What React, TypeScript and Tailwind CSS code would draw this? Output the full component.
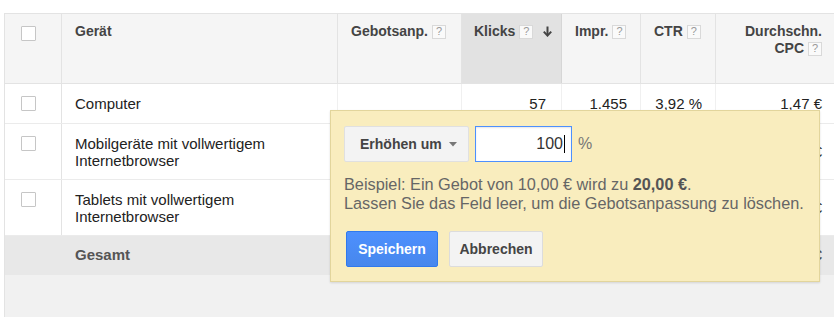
import React from "react";

const Q = () => (
  <span className="inline-flex items-center justify-center w-[14px] h-[14px] ml-[4px] border border-[#d9d9d9] bg-[#fafafa] text-[#999] text-[11px] font-normal leading-none align-[1px]">
    ?
  </span>
);

const Box = () => (
  <div className="w-[15px] h-[15px] border border-[#c6c6c6] bg-white rounded-[1px]" />
);

const DownArrow = () => (
  <svg width="9" height="11" viewBox="0 0 9 11" className="inline-block ml-[10px] align-[-1px]">
    <path d="M4.5 0.5 V9" stroke="#444" strokeWidth="2" />
    <path d="M0.8 5.6 L4.5 9.6 L8.2 5.6" stroke="#444" strokeWidth="2" fill="none" />
  </svg>
);

type Row = { name: string[]; klicks: string; impr: string; ctr: string; cpc: string; h: string };

const rows: Row[] = [
  { name: ["Computer"], klicks: "57", impr: "1.455", ctr: "3,92 %", cpc: "1,47 €", h: "h-[40px]" },
  { name: ["Mobilgeräte mit vollwertigem", "Internetbrowser"], klicks: "", impr: "", ctr: "", cpc: "€", h: "h-[56px]" },
  { name: ["Tablets mit vollwertigem", "Internetbrowser"], klicks: "", impr: "", ctr: "", cpc: "€", h: "h-[56px]" },
];

export default function App() {
  return (
    <div className="relative w-[834px] h-[319px] bg-white overflow-hidden font-['Liberation_Sans',Arial,sans-serif]">
      <div className="pt-[13px] pl-[4px]">
        <div className="border-l border-[#e3e3e3]">
          {/* header */}
          <div className="flex h-[71px] bg-[#f5f5f5] border-t border-b border-[#e3e3e3] text-[14px] leading-[17px] font-bold text-[#444]">
            <div className="w-[57px] shrink-0 border-r border-[#e3e3e3] pl-[16px] pt-[12px]">
              <Box />
            </div>
            <div className="w-[276px] shrink-0 border-r border-[#e3e3e3] pl-[13px] pt-[9px]">Gerät</div>
            <div className="w-[124px] shrink-0 border-r border-[#e3e3e3] pl-[13px] pt-[9px] whitespace-nowrap">
              Gebotsanp.<Q />
            </div>
            <div className="w-[100px] shrink-0 border-r border-[#d6d6d6] bg-[#e2e2e2] pl-[12px] pt-[9px] whitespace-nowrap">
              Klicks<Q />
              <DownArrow />
            </div>
            <div className="w-[79px] shrink-0 border-r border-[#e3e3e3] pl-[13px] pt-[9px] whitespace-nowrap">
              Impr.<Q />
            </div>
            <div className="w-[75px] shrink-0 border-r border-[#e3e3e3] pl-[13px] pt-[9px] whitespace-nowrap">
              CTR<Q />
            </div>
            <div className="flex-1 pr-[12px] pt-[9px] text-right">
              <div>Durchschn.</div>
              <div>
                CPC<Q />
              </div>
            </div>
          </div>

          {/* rows */}
          {rows.map((r, i) => (
            <div
              key={i}
              className={`flex ${r.h} border-b border-[#ebebeb] text-[15px] leading-[17px] text-[#222]`}
            >
              <div className="w-[57px] shrink-0 border-r border-[#e3e3e3] pl-[16px] pt-[12px]">
                <Box />
              </div>
              <div className="w-[276px] shrink-0 border-r border-[#f0f0f0] pl-[13px] flex flex-col justify-center">
                {r.name.map((n, j) => (
                  <div key={j}>{n}</div>
                ))}
              </div>
              <div className="w-[124px] shrink-0 border-r border-[#f0f0f0]" />
              <div className="w-[100px] shrink-0 border-r border-[#f0f0f0] pr-[15px] flex items-center justify-end">{r.klicks}</div>
              <div className="w-[79px] shrink-0 border-r border-[#f0f0f0] pr-[13px] flex items-center justify-end">{r.impr}</div>
              <div className="w-[75px] shrink-0 border-r border-[#f0f0f0] pr-[13px] flex items-center justify-end">{r.ctr}</div>
              <div className="flex-1 pr-[12px] flex items-center justify-end">{r.cpc}</div>
            </div>
          ))}

          {/* footer */}
          <div className="flex h-[39px] bg-[#e8e8e8] text-[15px] font-bold text-[#555] items-center">
            <div className="w-[57px] shrink-0" />
            <div className="w-[276px] shrink-0 pl-[13px]">Gesamt</div>
            <div className="flex-1 pr-[12px] text-right">€</div>
          </div>
          <div className="h-[42px] bg-[#f1f1f1]" />
        </div>
      </div>

      {/* popup */}
      <div className="absolute left-[330px] top-[110px] w-[490px] h-[172px] bg-[#f9edbe] border border-[#e2d59c] shadow-[0_1px_2px_rgba(0,0,0,0.12)] pl-[13px] pt-[15px]">
        <div className="flex items-center">
          <div className="w-[125px] h-[36px] bg-[#f3f3f3] border border-[#e0e0e0] rounded-[2px] flex items-center pl-[15px] text-[14px] font-bold text-[#444]">
            Erhöhen um
            <svg width="8" height="5" viewBox="0 0 8 5" className="ml-[7px]">
              <path d="M0 0 H8 L4 4.5 Z" fill="#777" />
            </svg>
          </div>
          <div className="ml-[6px] w-[97px] h-[36px] bg-white border border-[#4d90fe] shadow-[inset_0_1px_2px_rgba(0,0,0,0.1)] flex items-center justify-end pr-[6px] text-[16px] text-[#333]">
            100
            <span className="inline-block w-[1px] h-[18px] bg-black ml-[1px]" />
          </div>
          <span className="ml-[6px] text-[16px] text-[#777]">%</span>
        </div>
        <div className="mt-[13px] text-[16.3px] leading-[19px] text-[#666]">
          <div>
            Beispiel: Ein Gebot von 10,00 € wird zu <b className="font-bold text-[#555]">20,00 €</b>.
          </div>
          <div>Lassen Sie das Feld leer, um die Gebotsanpassung zu löschen.</div>
        </div>
        <div className="mt-[18px] flex">
          <div className="ml-[2px] w-[92px] h-[36px] rounded-[2px] border border-[#3079ed] bg-[linear-gradient(#4d90fe,#4787ed)] text-white text-[14px] font-bold flex items-center justify-center">
            Speichern
          </div>
          <div className="ml-[11px] w-[94px] h-[36px] rounded-[2px] border border-[#dcdcdc] bg-[#f3f3f3] text-[#444] text-[14px] font-bold flex items-center justify-center">
            Abbrechen
          </div>
        </div>
      </div>
    </div>
  );
}
